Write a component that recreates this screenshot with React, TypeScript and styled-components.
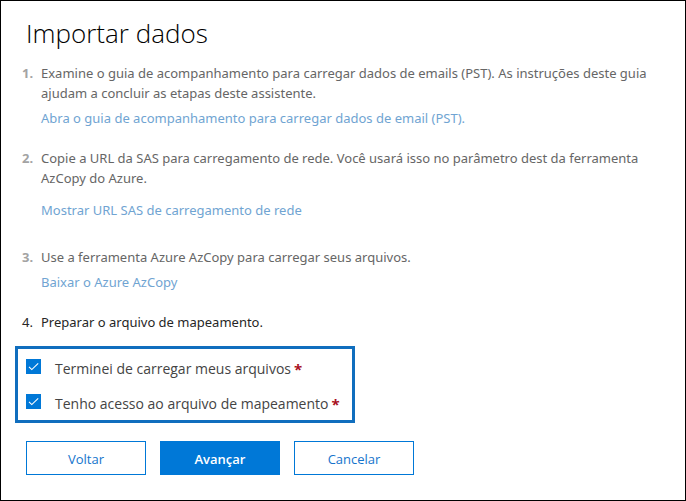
import React, { useState } from "react";
import styled, { createGlobalStyle } from "styled-components";

const GlobalStyle = createGlobalStyle`
  *, *::before, *::after { box-sizing: border-box; }
  body {
    margin: 0;
    background: #fff;
    font-family: "Noto Sans", "Open Sans", sans-serif;
    font-size: 13px;
    line-height: 20px;
    color: #333;
  }
`;

const Wizard = styled.main`
  min-height: 100vh;
  padding: 12px 26px 24px 14px;
  border: 1px solid #000;
`;

const Title = styled.h1`
  margin: 0 0 10px 11px;
  font-family: "Open Sans", "Noto Sans", sans-serif;
  font-size: 26px;
  line-height: 40px;
  font-weight: 300;
  color: #000;
`;

const Steps = styled.ol`
  margin: 0;
  padding: 0 0 0 7px;
  list-style: none;
`;

const Step = styled.li<{ $done?: boolean; $gap: number }>`
  display: grid;
  grid-template-columns: 19px 1fr;
  margin-bottom: ${(p) => p.$gap}px;
  color: ${(p) => (p.$done ? "#666" : "#262626")};
`;

const StepNumber = styled.span<{ $done?: boolean }>`
  font-weight: ${(p) => (p.$done ? 700 : 400)};
  color: ${(p) => (p.$done ? "#a3a3a3" : "inherit")};
`;

const StepText = styled.p`
  margin: 0;
`;

const StepLink = styled.a<{ $gap: number }>`
  display: inline-block;
  margin-top: ${(p) => p.$gap}px;
  color: #70a4d2;
  text-decoration: none;
  &:hover { text-decoration: underline; }
`;

const Confirmations = styled.div`
  display: flex;
  flex-direction: column;
  gap: 15px;
  width: fit-content;
  padding: 10px 12px 6px 8px;
  border: 3px solid #106ebe;
`;

const CheckLabel = styled.label`
  display: flex;
  align-items: flex-start;
  font-family: "Open Sans", "Noto Sans", sans-serif;
  font-size: 14px;
  line-height: 20px;
  color: #444;
`;

const CheckBox = styled.span`
  display: grid;
  width: 15px;
  height: 15px;
  margin-right: 14px;
  > * { grid-area: 1 / 1; }
`;

const CheckInput = styled.input`
  appearance: none;
  width: 15px;
  height: 15px;
  margin: 0;
  border: 1px solid #0078d7;
  background: #fff;
  &:checked { background: #0078d7; }
`;

const CheckMark = styled.svg`
  pointer-events: none;
`;

const Required = styled.span`
  margin-left: 3px;
  font-size: 15px;
  font-weight: 700;
  color: #a80f22;
`;

const Actions = styled.div`
  display: flex;
  flex-wrap: wrap;
  gap: 14px;
  margin: 18px 0 0 11px;
`;

const Button = styled.button<{ $primary?: boolean }>`
  width: 120px;
  height: 34px;
  padding: 2px 0 0;
  border: 1px solid #0078d7;
  background: ${(p) => (p.$primary ? "#0078d7" : "#fff")};
  color: ${(p) => (p.$primary ? "#fff" : "#1474cc")};
  font-family: "Open Sans", "Noto Sans", sans-serif;
  font-size: 13px;
  font-weight: ${(p) => (p.$primary ? 600 : 400)};
  cursor: pointer;
`;

interface StepData {
  text: string;
  done?: boolean;
  link?: string;
  linkGap?: number;
  gap: number;
}

const steps: StepData[] = [
  {
    text: "Examine o guia de acompanhamento para carregar dados de emails (PST). As instruções deste guia ajudam a concluir as etapas deste assistente.",
    link: "Abra o guia de acompanhamento para carregar dados de email (PST).",
    linkGap: 5,
    done: true,
    gap: 20,
  },
  {
    text: "Copie a URL da SAS para carregamento de rede. Você usará isso no parâmetro dest da ferramenta AzCopy do Azure.",
    link: "Mostrar URL SAS de carregamento de rede",
    linkGap: 12,
    done: true,
    gap: 27,
  },
  {
    text: "Use a ferramenta Azure AzCopy para carregar seus arquivos.",
    link: "Baixar o Azure AzCopy",
    linkGap: 5,
    done: true,
    gap: 20,
  },
  { text: "Preparar o arquivo de mapeamento.", gap: 14 },
];

function Confirmation({ id, label }: { id: string; label: string }) {
  const [checked, setChecked] = useState(true);
  return (
    <CheckLabel htmlFor={id}>
      <CheckBox>
        <CheckInput
          id={id}
          type="checkbox"
          required
          checked={checked}
          onChange={(e) => setChecked(e.target.checked)}
        />
        {checked && (
          <CheckMark width="15" height="15" viewBox="0 0 15 15" fill="none" aria-hidden="true">
            <path d="M3 7.8L5.8 10.6L12.2 4.4" stroke="#fff" strokeWidth="1.1" />
          </CheckMark>
        )}
      </CheckBox>
      {label}
      <Required>*</Required>
    </CheckLabel>
  );
}

export default function App() {
  return (
    <>
      <GlobalStyle />
      <Wizard>
        <Title>Importar dados</Title>
        <Steps>
          {steps.map((step, i) => (
            <Step key={step.text} $done={step.done} $gap={step.gap}>
              <StepNumber $done={step.done}>{i + 1}.</StepNumber>
              <div>
                <StepText>{step.text}</StepText>
                {step.link && (
                  <StepLink href="#" $gap={step.linkGap ?? 0}>
                    {step.link}
                  </StepLink>
                )}
              </div>
            </Step>
          ))}
        </Steps>
        <Confirmations>
          <Confirmation id="uploaded" label="Terminei de carregar meus arquivos" />
          <Confirmation id="mapping" label="Tenho acesso ao arquivo de mapeamento" />
        </Confirmations>
        <Actions>
          <Button type="button">Voltar</Button>
          <Button type="button" $primary>Avançar</Button>
          <Button type="button">Cancelar</Button>
        </Actions>
      </Wizard>
    </>
  );
}
